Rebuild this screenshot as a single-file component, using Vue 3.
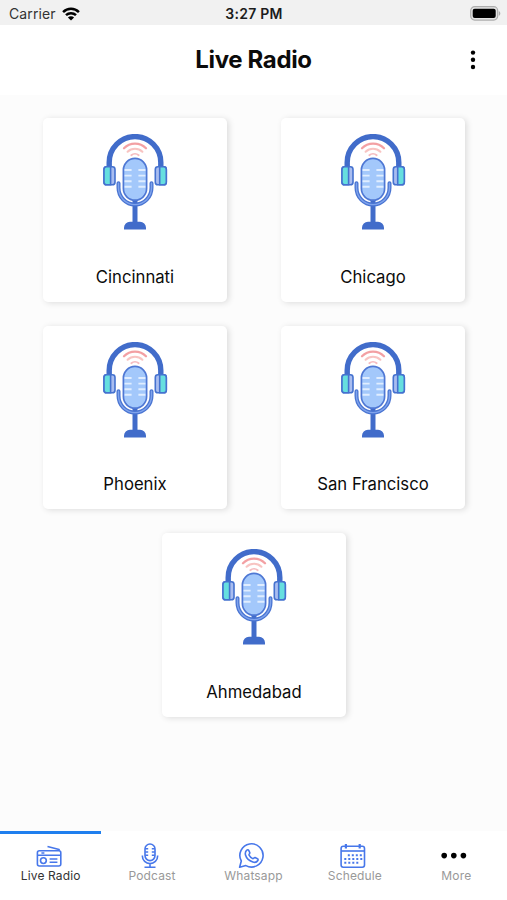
<template>
  <div class="screen">
    <div class="statusBar">
      <div class="carrier">
        <span>Carrier</span>
        <svg class="wifi" viewBox="0 0 18 14" width="18" height="14">
          <path d="M1.1 5.1a11.2 11.2 0 0 1 15.8 0M4 8.2a7.1 7.1 0 0 1 10 0" />
          <path class="wifiDot" d="M9 13.6 5.9 10.5a4.4 4.4 0 0 1 6.2 0z" />
        </svg>
      </div>
      <span class="time">3:27 PM</span>
      <div class="batteryBox">
        <svg viewBox="0 0 31 15" width="31" height="15">
          <rect x="0.7" y="0.7" width="27" height="13.4" rx="4" fill="#e4e4e4" stroke="#adadad" stroke-width="1.2" />
          <rect x="2.7" y="2.7" width="23" height="9.4" rx="2" fill="#000" />
          <path d="M28.8 5c2 .8 2 4 0 4.8z" fill="#adadad" />
        </svg>
      </div>
    </div>

    <header class="header">
      <h1>Live Radio</h1>
      <button class="menu" aria-label="Menu">
        <svg viewBox="0 0 6 20" width="6" height="20">
          <circle v-for="y in [2.6, 9.8, 17]" :key="y" cx="3" :cy="y" r="2.2" />
        </svg>
      </button>
    </header>

    <main class="stations">
      <div class="card" v-for="station in stations" :key="station">
        <svg viewBox="0 0 96 96" width="96" height="96">
          <!-- sound waves -->
          <g fill="none" stroke-linecap="round">
            <path d="M37 14.2a15.5 15.5 0 0 1 22 0" stroke="#f3a0a3" stroke-width="2.3" />
            <path d="M40.6 17.7a10.7 10.7 0 0 1 14.8 0" stroke="#f8c4c2" stroke-width="2.1" />
            <path d="M44.3 21.2a5.6 5.6 0 0 1 7.4 0" stroke="#f5bcc0" stroke-width="1.8" />
          </g>
          <!-- headphones -->
          <path d="M22.2 33V28.6a25.8 26 0 0 1 51.6 0V33" fill="none" stroke="#416cca" stroke-width="5.4" />
          <g stroke="#4572cf" stroke-width="1.6">
            <rect x="17" y="32.8" width="11" height="18" rx="2.6" fill="#a9bdf0" />
            <path d="M23.6 32.8h-4a2.6 2.6 0 0 0-2.6 2.6v12.8a2.6 2.6 0 0 0 2.6 2.6h4z" fill="#66dfdf" />
            <rect x="68.3" y="32.8" width="11" height="18" rx="2.6" fill="#a9bdf0" />
            <path d="M72.7 32.8h4a2.6 2.6 0 0 1 2.6 2.6v12.8a2.6 2.6 0 0 1-2.6 2.6h-4z" fill="#66dfdf" />
          </g>
          <!-- stand -->
          <path d="M48 66v24" stroke="#416cca" stroke-width="5" />
          <path d="M37 95.4v-1.6a6 6 0 0 1 6-6h10a6 6 0 0 1 6 6v1.6z" fill="#416cca" />
          <g fill="none" stroke-linecap="round">
            <path d="M31.5 49.2v4.6a16.5 16.8 0 0 0 33 0v-4.6" stroke="#4a75d2" stroke-width="4" />
            <path d="M31.5 49.2v4.6a16.5 16.8 0 0 0 33 0v-4.6" stroke="#7fa3ec" stroke-width="1.4" />
          </g>
          <!-- microphone -->
          <rect x="36.4" y="24.4" width="23.2" height="41.8" rx="11.6" fill="#a3c8fb" stroke="#4f78d4" stroke-width="1.7" />
          <path
            v-for="y in [36, 41.6, 47.2, 52.8]"
            :key="y"
            :d="`M37.6 ${y}h7M51.4 ${y}h7`"
            stroke="#e0edff"
            stroke-width="1.9"
          />
        </svg>
        <span class="name">{{ station }}</span>
      </div>
    </main>

    <nav class="tabs">
      <button
        class="tab"
        v-for="tab in tabs"
        :key="tab"
        :class="{ active: tab === activeTab }"
        @click="activeTab = tab"
      >
        <svg v-if="tab === 'Live Radio'" class="tabIcon" viewBox="3.8 0 28 28" width="28" height="28">
          <rect x="4.2" y="8.8" width="23.4" height="15.2" rx="2" />
          <path d="M4.2 13.2h23.4M14.3 4.4l11.6 3.1v1.2M8.2 11h3" />
          <path d="M16.4 17h7.8M16.4 20.2h7.8" />
          <circle cx="10.2" cy="18.6" r="2.9" />
        </svg>
        <svg v-else-if="tab === 'Podcast'" class="tabIcon" viewBox="0 0 28 28" width="28" height="28">
          <rect x="7" y="2" width="10" height="16.6" rx="5" />
          <path d="M4.4 13.6v.6a7.6 7.4 0 0 0 15.2 0v-.6M12 21.6v3.4M6.5 25.3h11" />
          <path d="M7.2 6.8h3M13.8 6.8h3M7.2 10h3M13.8 10h3M7.2 13.2h3M13.8 13.2h3" />
        </svg>
        <svg v-else-if="tab === 'Whatsapp'" class="tabIcon" viewBox="2.4 0 28 28" width="28" height="28">
          <path d="M2 25.3l1.7-6.3A11.6 11.6 0 1 1 8.3 23.6z" />
          <path d="M9.2 8.2c.5-.5 1.5-.6 1.9.2l1.1 2.3c.3.7-1 1.7-.8 2.3.7 1.5 2 2.8 3.7 3.6.7.3 1.6-1.4 2.3-1.1l2.5 1.2c.7.3.7 1.2.3 1.8-1 1.8-2.9 2.2-4.9 1.5-3.8-1.3-6.5-3.8-7.4-7-.5-1.9 0-3.6 1.3-4.8z" />
        </svg>
        <svg v-else-if="tab === 'Schedule'" class="tabIcon" viewBox="2.9 0 28 28" width="28" height="28">
          <rect x="3" y="4.2" width="23.4" height="21" rx="2.2" />
          <path d="M3 9h23.4" />
          <path class="rings" d="M7.8 2v4.6M21.6 2v4.6" />
          <path class="days" d="M9.7 13.2h14M6.2 17h18M6.2 20.8h14" />
        </svg>
        <svg v-else class="tabIcon dots" viewBox="0 0 28 28" width="28" height="28">
          <circle v-for="x in [2.2, 11.8, 21.4]" :key="x" :cx="x" cy="13.6" r="2.8" />
        </svg>
        <span>{{ tab }}</span>
      </button>
    </nav>
  </div>
</template>

<script setup>
import { ref } from "vue";

const stations = ["Cincinnati", "Chicago", "Phoenix", "San Francisco", "Ahmedabad"];
const tabs = ["Live Radio", "Podcast", "Whatsapp", "Schedule", "More"];
const activeTab = ref("Live Radio");
</script>

<style>
body {
  margin: 0;
}
</style>

<style scoped>
.screen {
  display: flex;
  flex-direction: column;
  width: 507px;
  height: 900px;
  background: #fcfcfc;
  color: #0b0b0b;
  font-family: Inter, "Liberation Sans", sans-serif;
  overflow: hidden;
}
button {
  padding: 0;
  border: 0;
  background: none;
  font-family: inherit;
}
.statusBar {
  display: grid;
  grid-template-columns: 1fr auto 1fr;
  align-items: center;
  height: 25px;
  padding: 2px 6px 0 9px;
  box-sizing: border-box;
  background: #f1f1f1;
  font-size: 14px;
}
.carrier {
  display: flex;
  align-items: center;
  gap: 6px;
  color: #333;
  letter-spacing: 0.1px;
}
.wifi {
  fill: none;
  stroke: #000;
  stroke-width: 2.5;
}
.wifiDot {
  fill: #000;
  stroke: none;
}
.time {
  margin-right: 2px;
  color: #1c1c1c;
  font-weight: 600;
  letter-spacing: 0.25px;
}
.batteryBox {
  display: flex;
  justify-content: flex-end;
}
.header {
  display: grid;
  grid-template-columns: 60px 1fr 60px;
  align-items: center;
  height: 70px;
  background: #fff;
}
.header h1 {
  grid-column: 2;
  margin: 0 0 1px;
  font-size: 24px;
  font-weight: 700;
  letter-spacing: -0.35px;
  text-align: center;
}
.menu {
  display: flex;
  justify-content: center;
  padding-right: 8px;
}
.stations {
  flex: 1;
  display: flex;
  flex-wrap: wrap;
  align-content: flex-start;
  justify-content: center;
  gap: 24px 54px;
  padding: 23px 42px 0 43px;
}
.card {
  display: flex;
  flex-direction: column;
  align-items: center;
  justify-content: space-between;
  box-sizing: border-box;
  width: 184px;
  height: 183.7px;
  padding: 16px 0 15px;
  border-radius: 5px;
  background: #fff;
  box-shadow: 2px 1px 6px rgba(0, 0, 0, 0.13);
}
.name {
  font-size: 16.7px;
  line-height: 20px;
}
.tabs {
  display: flex;
  height: 69px;
  background: #fff;
}
.tab {
  flex: 1;
  display: flex;
  flex-direction: column;
  align-items: center;
  box-sizing: border-box;
  padding-top: 8px;
  border-top: 3px solid transparent;
  color: #999;
  font-size: 12px;
  line-height: 14px;
}
.tab > span {
  margin-top: -1px;
  letter-spacing: 0.15px;
}
.tab.active {
  border-top-color: #1f7fee;
  color: #333;
}
.tabIcon {
  overflow: visible;
  fill: none;
  stroke: #4777ea;
  stroke-width: 1.6;
  stroke-linejoin: round;
}
.rings {
  stroke-width: 2.2;
}
.days {
  stroke-width: 2;
  stroke-dasharray: 2 2;
}
.dots {
  fill: #000;
  stroke: none;
}
</style>
